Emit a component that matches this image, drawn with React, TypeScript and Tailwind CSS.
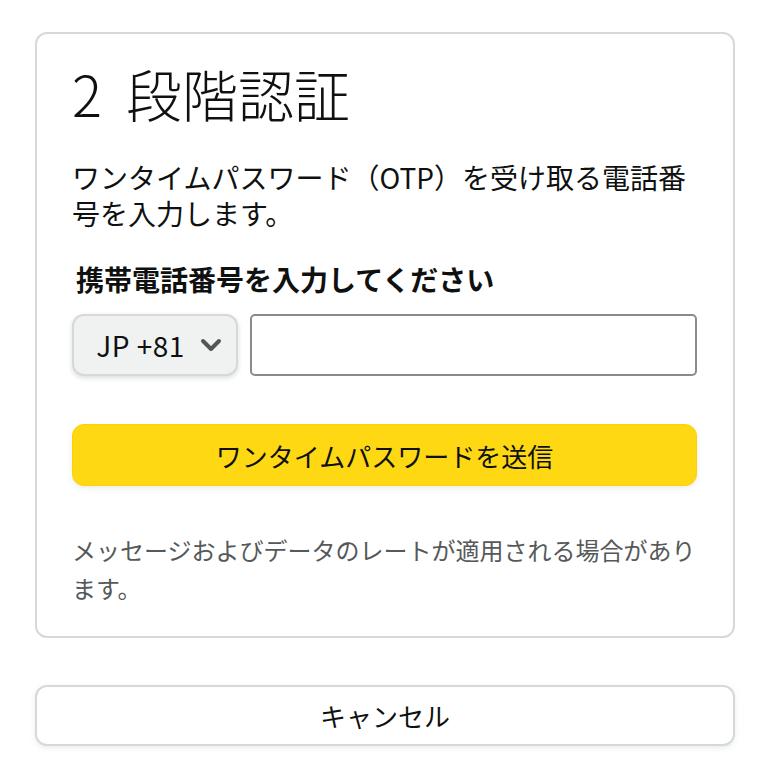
import React from 'react';

const font = { fontFamily: '"Noto Sans CJK JP", "Noto Sans", sans-serif' };

function Chevron() {
  return (
    <svg width="22" height="14" viewBox="0 0 22 14" className="ml-[15px]">
      <path d="M3 3 L11 11 L19 3" fill="none" stroke="#555" strokeWidth="4" strokeLinecap="round" strokeLinejoin="round" />
    </svg>
  );
}

export default function App() {
  return (
    <div className="bg-white min-h-[782px] w-[766px] pl-[35px] pt-[32px] text-[#0f1111]" style={font}>
      <div className="w-[700px] border-2 border-[#d5d9d9] rounded-[12px] pl-[35px] pr-[36px] pt-[27px] pb-[29px]">
        <h1 className="text-[56px] leading-[64px] font-light">
          <span className="mr-[24px]">2</span>段階認証
        </h1>

        <p className="mt-[34px] text-[28px] leading-[36px]">
          ワンタイムパスワード（OTP）を受け取る電話番号を入力します。
        </p>

        <label className="block mt-[30px] pl-[4px] text-[28px] leading-[36px] font-bold">
          携帯電話番号を入力してください
        </label>

        <div className="flex gap-[12px] mt-[17px]">
          <button className="w-[166px] h-[62px] flex items-center justify-center pl-[8px] rounded-[12px] bg-[#f0f2f2] border-2 border-[#d5d9d9] shadow-[0_2px_5px_rgba(15,17,17,0.15)] text-[28px] tracking-[0.5px]">
            <span>JP +81</span>
            <Chevron />
          </button>
          <input className="flex-1 h-[62px] border-2 border-[#888c8c] rounded-[5px] px-3 text-[27px] outline-none" />
        </div>

        <button className="mt-[48px] w-full h-[62px] rounded-[12px] bg-[#ffd814] border border-[#fcd200] shadow-[0_2px_5px_rgba(213,217,217,0.5)] text-[26px]">
          ワンタイムパスワードを送信
        </button>

        <p className="mt-[45px] text-[24px] leading-[38px] text-[#565959]">
          メッセージおよびデータのレートが適用される場合があります。
        </p>
      </div>

      <button className="mt-[47px] w-[700px] h-[61px] rounded-[12px] bg-white border-2 border-[#d5d9d9] shadow-[0_2px_5px_rgba(213,217,217,0.5)] text-[26px]">
        キャンセル
      </button>
    </div>
  );
}
